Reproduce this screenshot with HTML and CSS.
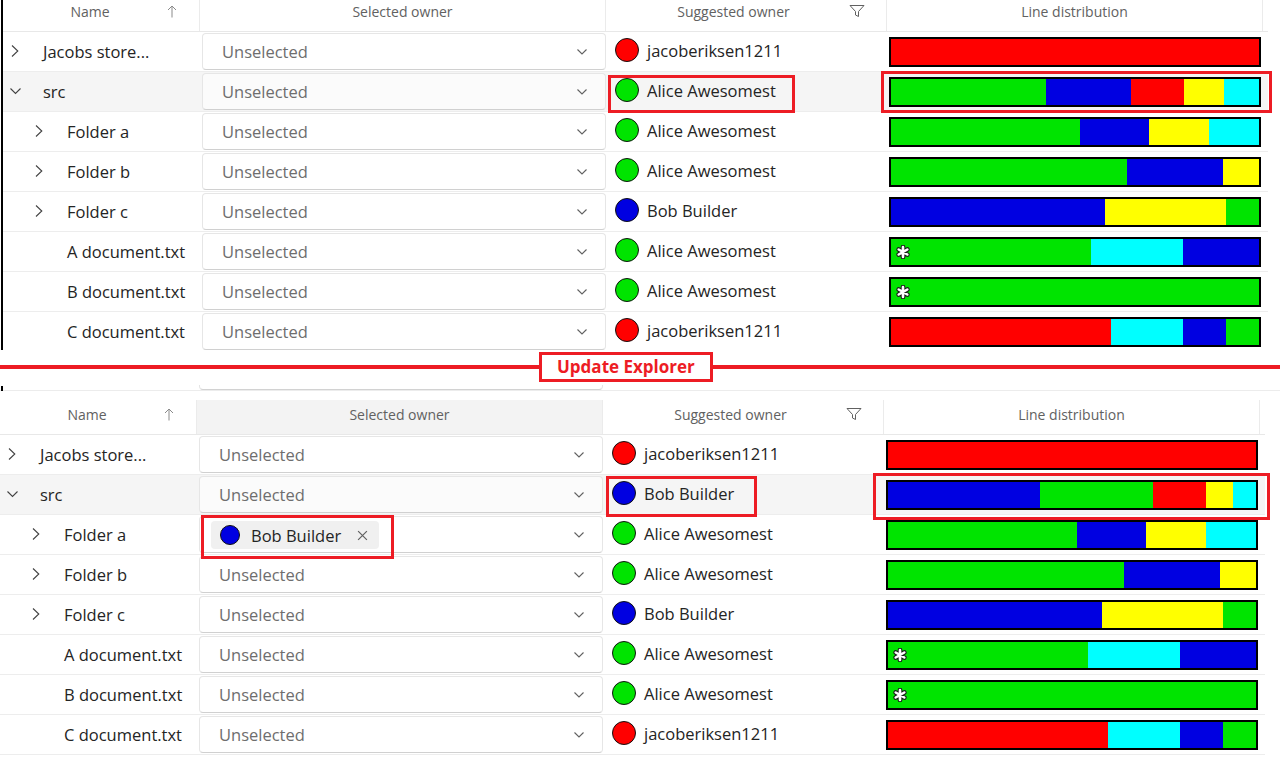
FILE: index.html
```html
<!DOCTYPE html>
<html lang="en">
<head>
<meta charset="utf-8">
<title>Update Explorer</title>
<link rel="stylesheet" href="styles.css">
</head>
<body>
<svg class="defs" width="0" height="0" aria-hidden="true">
  <symbol id="chev-r" viewBox="0 0 12 12"><path d="M3 0.5 L8.8 6 L3 11.5" fill="none" stroke="#424242" stroke-width="1.1"/></symbol>
  <symbol id="chev-d" viewBox="0 0 12 12"><path d="M1.5 3.5 L6.5 8.5 L11.5 3.5" fill="none" stroke="#424242" stroke-width="1.1"/></symbol>
  <symbol id="dd-chev" viewBox="0 0 10 6"><path d="M0.5 0.5 L5 5 L9.5 0.5" fill="none" stroke="#616161" stroke-width="1.1"/></symbol>
  <symbol id="sort-up" viewBox="0 0 10 13"><path d="M5 12.5 V1 M1 5 L5 1 L9 5" fill="none" stroke="#8a8a8a" stroke-width="1"/></symbol>
  <symbol id="funnel" viewBox="0 0 16 14"><path d="M1 1.5 H15 L9.5 7.5 V12.5 L6.5 11 V7.5 Z" fill="none" stroke="#616161" stroke-width="1" stroke-linejoin="round"/></symbol>
  <symbol id="close-x" viewBox="0 0 10 10"><path d="M1 1 L9 9 M9 1 L1 9" fill="none" stroke="#616161" stroke-width="1.1"/></symbol>
  <symbol id="star" viewBox="0 0 14 14">
    <g stroke="#1a1a1a" stroke-width="4.6" stroke-linecap="round"><path d="M7 2 V12 M2.7 4.5 L11.3 9.5 M2.7 9.5 L11.3 4.5"/></g>
    <g stroke="#fff" stroke-width="2.6" stroke-linecap="round"><path d="M7 2 V12 M2.7 4.5 L11.3 9.5 M2.7 9.5 L11.3 4.5"/></g>
  </symbol>
</svg>

<div class="page">
  <!-- TOP PANEL (before) -->
  <section class="panel panel-top">
    <div class="head">
      <div class="hc hc-icon hc-name"><span class="ht">Name</span><svg class="ico-sort"><use href="#sort-up"/></svg></div>
      <div class="hc"><span class="ht">Selected owner</span></div>
      <div class="hc hc-icon hc-sug"><span class="ht">Suggested owner</span><svg class="ico-funnel"><use href="#funnel"/></svg></div>
      <div class="hc"><span class="ht">Line distribution</span></div>
      <div class="hc-end"></div>
    </div>

    <div class="row">
      <div class="nc lv0"><svg class="tw"><use href="#chev-r"/></svg><span class="nt">Jacobs store...</span></div>
      <div class="sc"><div class="dd"><span class="ph">Unselected</span><svg class="ddc"><use href="#dd-chev"/></svg></div></div>
      <div class="oc"><span class="dot red"></span><span class="on">jacoberiksen1211</span></div>
      <div class="bc"><div class="bar"><i class="red" style="flex:100"></i></div></div>
    </div>
    <div class="row hl">
      <div class="nc lv0"><svg class="tw"><use href="#chev-d"/></svg><span class="nt">src</span></div>
      <div class="sc"><div class="dd"><span class="ph">Unselected</span><svg class="ddc"><use href="#dd-chev"/></svg></div></div>
      <div class="oc"><span class="dot green"></span><span class="on">Alice Awesomest</span></div>
      <div class="bc"><div class="bar"><i class="green" style="flex:42.1"></i><i class="blue" style="flex:23.1"></i><i class="red" style="flex:14.4"></i><i class="yellow" style="flex:10.9"></i><i class="cyan" style="flex:9.5"></i></div></div>
    </div>
    <div class="row">
      <div class="nc lv1"><svg class="tw"><use href="#chev-r"/></svg><span class="nt">Folder a</span></div>
      <div class="sc"><div class="dd"><span class="ph">Unselected</span><svg class="ddc"><use href="#dd-chev"/></svg></div></div>
      <div class="oc"><span class="dot green"></span><span class="on">Alice Awesomest</span></div>
      <div class="bc"><div class="bar"><i class="green" style="flex:51.4"></i><i class="blue" style="flex:18.8"></i><i class="yellow" style="flex:16.3"></i><i class="cyan" style="flex:13.5"></i></div></div>
    </div>
    <div class="row">
      <div class="nc lv1"><svg class="tw"><use href="#chev-r"/></svg><span class="nt">Folder b</span></div>
      <div class="sc"><div class="dd"><span class="ph">Unselected</span><svg class="ddc"><use href="#dd-chev"/></svg></div></div>
      <div class="oc"><span class="dot green"></span><span class="on">Alice Awesomest</span></div>
      <div class="bc"><div class="bar"><i class="green" style="flex:64.1"></i><i class="blue" style="flex:26.1"></i><i class="yellow" style="flex:9.8"></i></div></div>
    </div>
    <div class="row">
      <div class="nc lv1"><svg class="tw"><use href="#chev-r"/></svg><span class="nt">Folder c</span></div>
      <div class="sc"><div class="dd"><span class="ph">Unselected</span><svg class="ddc"><use href="#dd-chev"/></svg></div></div>
      <div class="oc"><span class="dot blue"></span><span class="on">Bob Builder</span></div>
      <div class="bc"><div class="bar"><i class="blue" style="flex:58.2"></i><i class="yellow" style="flex:32.9"></i><i class="green" style="flex:8.9"></i></div></div>
    </div>
    <div class="row">
      <div class="nc lv1"><span class="tw"></span><span class="nt">A document.txt</span></div>
      <div class="sc"><div class="dd"><span class="ph">Unselected</span><svg class="ddc"><use href="#dd-chev"/></svg></div></div>
      <div class="oc"><span class="dot green"></span><span class="on">Alice Awesomest</span></div>
      <div class="bc"><div class="bar"><i class="green" style="flex:54.3"><svg class="star"><use href="#star"/></svg></i><i class="cyan" style="flex:25"></i><i class="blue" style="flex:20.7"></i></div></div>
    </div>
    <div class="row">
      <div class="nc lv1"><span class="tw"></span><span class="nt">B document.txt</span></div>
      <div class="sc"><div class="dd"><span class="ph">Unselected</span><svg class="ddc"><use href="#dd-chev"/></svg></div></div>
      <div class="oc"><span class="dot green"></span><span class="on">Alice Awesomest</span></div>
      <div class="bc"><div class="bar"><i class="green" style="flex:100"><svg class="star"><use href="#star"/></svg></i></div></div>
    </div>
    <div class="row">
      <div class="nc lv1"><span class="tw"></span><span class="nt">C document.txt</span></div>
      <div class="sc"><div class="dd"><span class="ph">Unselected</span><svg class="ddc"><use href="#dd-chev"/></svg></div></div>
      <div class="oc"><span class="dot red"></span><span class="on">jacoberiksen1211</span></div>
      <div class="bc"><div class="bar"><i class="red" style="flex:59.8"></i><i class="cyan" style="flex:19.6"></i><i class="blue" style="flex:11.7"></i><i class="green" style="flex:8.9"></i></div></div>
    </div>
  </section>

  <!-- SEPARATOR -->
  <div class="sep">
    <div class="sep-line sep-left"></div>
    <div class="sep-label">Update Explorer</div>
    <div class="sep-line"></div>
  </div>

  <div class="sliver"><span class="tick"></span><span class="frag"></span></div>

  <!-- BOTTOM PANEL (after) -->
  <section class="panel panel-bottom">
    <div class="head">
      <div class="hc hc-icon hc-name"><span class="ht">Name</span><svg class="ico-sort"><use href="#sort-up"/></svg></div>
      <div class="hc hc-hover"><span class="ht">Selected owner</span></div>
      <div class="hc hc-icon hc-sug"><span class="ht">Suggested owner</span><svg class="ico-funnel"><use href="#funnel"/></svg></div>
      <div class="hc"><span class="ht">Line distribution</span></div>
      <div class="hc-end"></div>
    </div>

    <div class="row">
      <div class="nc lv0"><svg class="tw"><use href="#chev-r"/></svg><span class="nt">Jacobs store...</span></div>
      <div class="sc"><div class="dd"><span class="ph">Unselected</span><svg class="ddc"><use href="#dd-chev"/></svg></div></div>
      <div class="oc"><span class="dot red"></span><span class="on">jacoberiksen1211</span></div>
      <div class="bc"><div class="bar"><i class="red" style="flex:100"></i></div></div>
    </div>
    <div class="row hl">
      <div class="nc lv0"><svg class="tw"><use href="#chev-d"/></svg><span class="nt">src</span></div>
      <div class="sc"><div class="dd"><span class="ph">Unselected</span><svg class="ddc"><use href="#dd-chev"/></svg></div></div>
      <div class="oc"><span class="dot blue"></span><span class="on">Bob Builder</span></div>
      <div class="bc"><div class="bar"><i class="blue" style="flex:41.3"></i><i class="green" style="flex:30.7"></i><i class="red" style="flex:14.4"></i><i class="yellow" style="flex:7.3"></i><i class="cyan" style="flex:6.3"></i></div></div>
    </div>
    <div class="row">
      <div class="nc lv1"><svg class="tw"><use href="#chev-r"/></svg><span class="nt">Folder a</span></div>
      <div class="sc"><div class="dd dd-chip"><span class="chip"><span class="dot sm blue"></span><span class="chip-t">Bob Builder</span><svg class="ico-x"><use href="#close-x"/></svg></span><svg class="ddc"><use href="#dd-chev"/></svg></div></div>
      <div class="oc"><span class="dot green"></span><span class="on">Alice Awesomest</span></div>
      <div class="bc"><div class="bar"><i class="green" style="flex:51.4"></i><i class="blue" style="flex:18.8"></i><i class="yellow" style="flex:16.3"></i><i class="cyan" style="flex:13.5"></i></div></div>
    </div>
    <div class="row">
      <div class="nc lv1"><svg class="tw"><use href="#chev-r"/></svg><span class="nt">Folder b</span></div>
      <div class="sc"><div class="dd"><span class="ph">Unselected</span><svg class="ddc"><use href="#dd-chev"/></svg></div></div>
      <div class="oc"><span class="dot green"></span><span class="on">Alice Awesomest</span></div>
      <div class="bc"><div class="bar"><i class="green" style="flex:64.1"></i><i class="blue" style="flex:26.1"></i><i class="yellow" style="flex:9.8"></i></div></div>
    </div>
    <div class="row">
      <div class="nc lv1"><svg class="tw"><use href="#chev-r"/></svg><span class="nt">Folder c</span></div>
      <div class="sc"><div class="dd"><span class="ph">Unselected</span><svg class="ddc"><use href="#dd-chev"/></svg></div></div>
      <div class="oc"><span class="dot blue"></span><span class="on">Bob Builder</span></div>
      <div class="bc"><div class="bar"><i class="blue" style="flex:58.2"></i><i class="yellow" style="flex:32.9"></i><i class="green" style="flex:8.9"></i></div></div>
    </div>
    <div class="row">
      <div class="nc lv1"><span class="tw"></span><span class="nt">A document.txt</span></div>
      <div class="sc"><div class="dd"><span class="ph">Unselected</span><svg class="ddc"><use href="#dd-chev"/></svg></div></div>
      <div class="oc"><span class="dot green"></span><span class="on">Alice Awesomest</span></div>
      <div class="bc"><div class="bar"><i class="green" style="flex:54.3"><svg class="star"><use href="#star"/></svg></i><i class="cyan" style="flex:25"></i><i class="blue" style="flex:20.7"></i></div></div>
    </div>
    <div class="row">
      <div class="nc lv1"><span class="tw"></span><span class="nt">B document.txt</span></div>
      <div class="sc"><div class="dd"><span class="ph">Unselected</span><svg class="ddc"><use href="#dd-chev"/></svg></div></div>
      <div class="oc"><span class="dot green"></span><span class="on">Alice Awesomest</span></div>
      <div class="bc"><div class="bar"><i class="green" style="flex:100"><svg class="star"><use href="#star"/></svg></i></div></div>
    </div>
    <div class="row">
      <div class="nc lv1"><span class="tw"></span><span class="nt">C document.txt</span></div>
      <div class="sc"><div class="dd"><span class="ph">Unselected</span><svg class="ddc"><use href="#dd-chev"/></svg></div></div>
      <div class="oc"><span class="dot red"></span><span class="on">jacoberiksen1211</span></div>
      <div class="bc"><div class="bar"><i class="red" style="flex:59.8"></i><i class="cyan" style="flex:19.6"></i><i class="blue" style="flex:11.7"></i><i class="green" style="flex:8.9"></i></div></div>
    </div>
  </section>

  <!-- annotation marks -->
  <span class="mark m-top-owner"></span>
  <span class="mark m-top-bar"></span>
  <span class="mark m-bot-chip"></span>
  <span class="mark m-bot-owner"></span>
  <span class="mark m-bot-bar"></span>
</div>
</body>
</html>
```

FILE: styles.css
```css
html, body {
  margin: 0;
  padding: 0;
  background: #ffffff;
}

body {
  font-family: "Open Sans", "Noto Sans", "Liberation Sans", sans-serif;
  color: #242424;
  overflow: hidden;
}

.defs {
  position: absolute;
  width: 0;
  height: 0;
  overflow: hidden;
}

.page {
  position: relative;
  width: 1280px;
  height: 758px;
  overflow: hidden;
}

/* ---------- panels ---------- */
.panel {
  box-sizing: border-box;
}

.panel-top {
  margin-top: -12px;
  margin-left: 1px;
  border-left: 2px solid #000;
  height: 362px;
  width: 1267px;
  overflow: hidden;
}

.panel-bottom {
  width: 1265px;
}

/* ---------- header ---------- */
.head {
  display: grid;
  grid-template-columns: 197px 406px 281px 376px 1fr;
  height: 44px;
  box-sizing: border-box;
  border-bottom: 1px solid #e8e8e8;
}

.hc {
  margin-top: 9px;
  height: 34px;
  box-sizing: border-box;
  padding-bottom: 6px;
  border-right: 1px solid #ebebeb;
  display: flex;
  align-items: center;
  justify-content: center;
  font-size: 14px;
  color: #616161;
  white-space: nowrap;
}

.hc-end {
  margin-top: 9px;
}

.hc-hover {
  background: #f3f3f3;
}

.hc-icon {
  padding-left: 12px;
}

.hc-icon .ht {
  flex: 1;
  text-align: center;
}

.hc-name {
  padding-right: 20px;
}

.hc-sug {
  padding-right: 21px;
}

.ico-sort {
  width: 10px;
  height: 13px;
  margin: 0 2px;
  flex: none;
}

.ico-funnel {
  width: 16px;
  height: 14px;
  flex: none;
}

/* ---------- rows ---------- */
.row {
  display: grid;
  grid-template-columns: 197px 406px 281px 376px 1fr;
  height: 40px;
  box-sizing: border-box;
  border-bottom: 1px solid #ededed;
}

.row.hl {
  background: #f5f5f5;
}

.nc {
  display: flex;
  align-items: center;
  font-size: 16.5px;
  color: #242424;
  white-space: nowrap;
}

.nc.lv0 {
  padding-left: 6px;
}

.nc.lv1 {
  padding-left: 30px;
}

.tw {
  width: 12px;
  height: 12px;
  flex: none;
  margin-top: -2px;
}

.nt {
  margin-left: 22px;
}

/* dropdown */
.sc {
  padding-left: 2px;
}

.dd {
  margin-top: 1px;
  width: 404px;
  height: 37px;
  box-sizing: border-box;
  border: 1px solid #e6e6e6;
  border-bottom-color: #d0d0d0;
  border-radius: 4px;
  background: #ffffff;
  display: flex;
  align-items: center;
  justify-content: space-between;
  padding: 0 18px 0 19px;
}

.row.hl .dd {
  background: #fbfbfb;
}

.ph {
  font-size: 16.5px;
  color: #6e6e6e;
}

.ddc {
  width: 10px;
  height: 6px;
  flex: none;
}

.dd-chip {
  padding-left: 11px;
}

.chip {
  display: flex;
  align-items: center;
  height: 28px;
  background: #f0f0f0;
  border-radius: 4px;
  padding: 0 11px 0 9px;
  margin-top: 1px;
}

.chip-t {
  font-size: 16.5px;
  color: #242424;
  margin-left: 11px;
  margin-right: 16px;
}

.ico-x {
  width: 11px;
  height: 11px;
  flex: none;
}

/* owner */
.oc {
  display: flex;
  align-items: center;
  padding-left: 9px;
  padding-bottom: 3px;
}

.dot {
  width: 24px;
  height: 24px;
  box-sizing: border-box;
  border-radius: 50%;
  border: 1.5px solid #111;
  flex: none;
}

.dot.sm {
  width: 20px;
  height: 20px;
}

.dot.red { background: #ff0000; }
.dot.green { background: #00e400; }
.dot.blue { background: #0000e1; }

.on {
  margin-left: 8px;
  font-size: 16.5px;
  color: #242424;
  white-space: nowrap;
}

/* bars */
.bc {
  padding-left: 2px;
}

.bar {
  margin-top: 5px;
  width: 372px;
  height: 30px;
  box-sizing: border-box;
  border: 2px solid #000;
  display: flex;
}

.bar i {
  display: flex;
  align-items: center;
  flex-basis: 0;
  min-width: 0;
}

.bar i.red { background: #ff0000; }
.bar i.green { background: #00e400; }
.bar i.blue { background: #0000e1; }
.bar i.yellow { background: #ffff00; }
.bar i.cyan { background: #00ffff; }

.star {
  width: 14px;
  height: 14px;
  margin-left: 5px;
  flex: none;
}

/* ---------- separator ---------- */
.sep {
  display: flex;
  align-items: center;
  height: 34px;
}

.sep-line {
  height: 4px;
  background: #ed1c24;
  flex: 1;
}

.sep-left {
  flex: none;
  width: 539px;
}

.sep-label {
  height: 30px;
  box-sizing: border-box;
  border: 3px solid #ed1c24;
  padding: 0 15px;
  font-size: 17px;
  font-weight: 700;
  line-height: 23px;
  color: #ed1c24;
  white-space: nowrap;
  background: #fff;
}

/* cut-off top of the second capture */
.sliver {
  height: 7px;
  box-sizing: border-box;
  border-bottom: 1px solid #ececec;
  display: flex;
  align-items: flex-end;
}

.tick {
  width: 2px;
  height: 5px;
  margin-left: 1px;
  margin-bottom: -1px;
  background: #000;
}

.frag {
  margin-left: 196px;
  width: 404px;
  height: 5px;
  box-sizing: border-box;
  border: 1px solid #e4e4e4;
  border-top: none;
  border-bottom-color: #d2d2d2;
  border-radius: 0 0 4px 4px;
}

/* ---------- annotation marks ---------- */
.mark {
  position: absolute;
  box-sizing: border-box;
  border: 3px solid #ed1c24;
  pointer-events: none;
}

.m-top-owner { left: 608px; top: 75px; width: 187px; height: 38px; }
.m-top-bar { left: 881px; top: 71px; width: 391px; height: 42px; }
.m-bot-chip { left: 201px; top: 515px; width: 193px; height: 44px; }
.m-bot-owner { left: 606px; top: 476px; width: 151px; height: 41px; }
.m-bot-bar { left: 873px; top: 473px; width: 397px; height: 47px; }
```
